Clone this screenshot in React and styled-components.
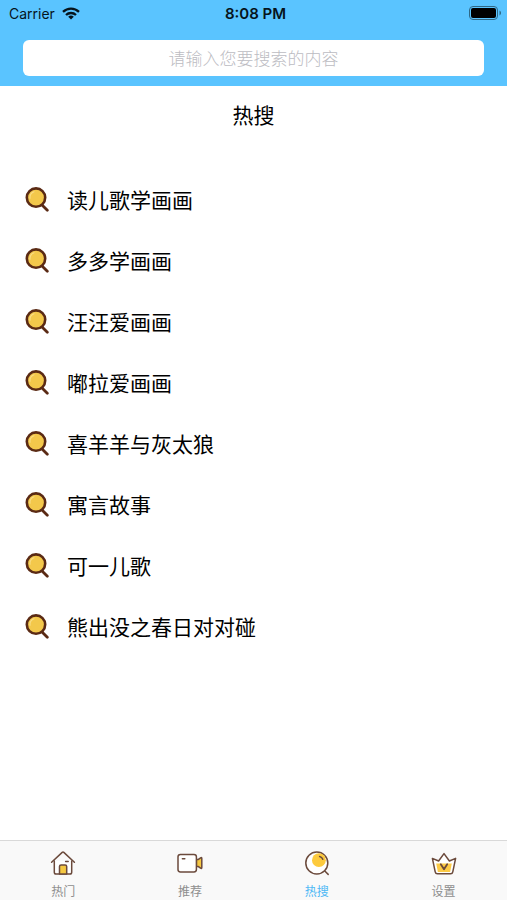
import React, { useState } from "react";
import styled, { createGlobalStyle } from "styled-components";

const COLORS = {
  sky: "#5ac4ff",
  skyText: "#4db8f5",
  outline: "#6b4a3c",
  brown: "#5a2a14",
  yellow: "#f5c842",
};

const HOT_SEARCHES = [
  "读儿歌学画画",
  "多多学画画",
  "汪汪爱画画",
  "嘟拉爱画画",
  "喜羊羊与灰太狼",
  "寓言故事",
  "可一儿歌",
  "熊出没之春日对对碰",
];

const WifiIcon = () => (
  <svg width="18" height="13" viewBox="0 0 18 13" aria-hidden="true">
    <g fill="none" stroke="#06141c" strokeWidth="2.3">
      <path d="M1 4.9a11.6 11.6 0 0 1 16 0" />
      <path d="M4 8a7.3 7.3 0 0 1 10 0" />
    </g>
    <path d="M9 12.6 6.2 9.8a4.1 4.1 0 0 1 5.6 0z" fill="#06141c" />
  </svg>
);

const BatteryIcon = () => (
  <svg width="33" height="14" viewBox="0 0 33 14" aria-hidden="true">
    <rect
      x="0.5"
      y="0.5"
      width="28"
      height="13"
      rx="3.5"
      fill="none"
      stroke="#2f6885"
    />
    <rect x="2" y="2" width="25" height="10" rx="2" fill="#000" />
    <path d="M30.5 4.6c2 .8 2 4 0 4.8z" fill="#2f6885" />
  </svg>
);

const MagnifierIcon = () => (
  <svg width="24" height="27" viewBox="0 -2 24 27" aria-hidden="true">
    <path
      d="m16.5 17.5 5.8 5.8"
      stroke={COLORS.brown}
      strokeWidth="2.8"
      strokeLinecap="round"
    />
    <circle
      cx="11"
      cy="10.6"
      r="9.2"
      fill="#f3c84b"
      stroke={COLORS.brown}
      strokeWidth="2.6"
    />
    <path
      d="M5 11.2a6.2 6.2 0 0 1 4-6.4"
      fill="none"
      stroke="#f9dd85"
      strokeWidth="1.2"
      strokeLinecap="round"
    />
  </svg>
);

const HomeIcon = () => (
  <svg width="26" height="26" viewBox="0 0 26 26" aria-hidden="true">
    <g
      fill="none"
      stroke={COLORS.outline}
      strokeWidth="1.5"
      strokeLinecap="round"
      strokeLinejoin="round"
    >
      <path d="M4.3 11v11.2q0 1.8 1.8 1.8h13.8q1.8 0 1.8-1.8V11" fill="#fff" />
      <path d="M1.6 12.2 12.2 2.4q.8-.7 1.6 0l10.6 9.8" />
      <path
        d="M9.5 24v-7.4q0-1.6 1.6-1.6h4q1.6 0 1.6 1.6V24z"
        fill={COLORS.yellow}
      />
      <path d="M15.6 11.4h2.6" />
    </g>
  </svg>
);

const VideoIcon = () => (
  <svg width="26" height="26" viewBox="0 0 26 26" aria-hidden="true">
    <g stroke={COLORS.outline} strokeWidth="1.5" strokeLinejoin="round">
      <path
        d="M19.4 9.4h2l2.2-1.6q1.2-.6 1.2.8v8.8q0 1.4-1.2.8l-2.2-1.6h-2z"
        fill={COLORS.yellow}
      />
      <rect x="1" y="4.4" width="18.4" height="17.6" rx="2.4" fill="#fff" />
      <path d="M5.4 8.8h2.4" strokeLinecap="round" />
    </g>
  </svg>
);

const SearchTabIcon = () => (
  <svg width="26" height="26" viewBox="0 0 26 26" aria-hidden="true">
    <circle
      cx="12.8"
      cy="13"
      r="11"
      fill="#fff"
      stroke={COLORS.outline}
      strokeWidth="1.5"
    />
    <circle cx="14.9" cy="10.2" r="6.9" fill="#fdca3d" />
    <g
      fill="none"
      stroke={COLORS.outline}
      strokeWidth="1.5"
      strokeLinecap="round"
    >
      <path d="M15.6 6.4q2.4.6 3.2 2.8" />
      <path d="m20.8 21 3.4 3.4" />
    </g>
  </svg>
);

const CrownIcon = () => (
  <svg width="26" height="26" viewBox="0 0 26 26" aria-hidden="true">
    <path
      d="M1.4 8.4 7.6 11 13 3.6l5.4 7.4 6.2-2.6-2.8 13.4q-.4 2-2.2 2H6.4q-1.8 0-2.2-2z"
      fill="#fff"
    />
    <path d="M5.2 13.4h15.6l-1.7 8.5H6.9z" fill="#fdcb45" />
    <g
      fill="none"
      stroke={COLORS.outline}
      strokeWidth="1.5"
      strokeLinecap="round"
      strokeLinejoin="round"
    >
      <path d="M1.4 8.4 7.6 11 13 3.6l5.4 7.4 6.2-2.6-2.8 13.4q-.4 2-2.2 2H6.4q-1.8 0-2.2-2z" />
      <path d="m9.8 14.2 3.2 5 3.2-5" strokeWidth="1.8" />
    </g>
  </svg>
);

const TABS = [
  { id: "home", label: "热门", Icon: HomeIcon },
  { id: "recommended", label: "推荐", Icon: VideoIcon },
  { id: "search", label: "热搜", Icon: SearchTabIcon },
  { id: "settings", label: "设置", Icon: CrownIcon },
];

const App = () => {
  const [query, setQuery] = useState("");
  const [activeTab, setActiveTab] = useState("search");

  return (
    <>
      <GlobalStyles />
      <Screen>
        <Header>
          <StatusBar>
            <Carrier>
              Carrier
              <WifiIcon />
            </Carrier>
            <Clock>8:08 PM</Clock>
            <Battery>
              <BatteryIcon />
            </Battery>
          </StatusBar>
          <SearchInput
            type="text"
            aria-label="搜索"
            placeholder="请输入您要搜索的内容"
            value={query}
            onChange={(event) => setQuery(event.target.value)}
          />
        </Header>
        <Main>
          <Title>热搜</Title>
          <List>
            {HOT_SEARCHES.map((term) => (
              <li key={term}>
                <TermButton type="button" onClick={() => setQuery(term)}>
                  <MagnifierIcon />
                  {term}
                </TermButton>
              </li>
            ))}
          </List>
        </Main>
        <TabBar>
          {TABS.map(({ id, label, Icon }) => (
            <Tab
              key={id}
              type="button"
              $active={id === activeTab}
              onClick={() => setActiveTab(id)}
            >
              <Icon />
              {label}
            </Tab>
          ))}
        </TabBar>
      </Screen>
    </>
  );
};

const GlobalStyles = createGlobalStyle`
  *, *::before, *::after {
    box-sizing: border-box;
  }

  body {
    margin: 0;
    background: #fff;
    color: #000;
    font-family: "Noto Sans CJK SC", sans-serif;
  }

  button, input {
    font: inherit;
    color: inherit;
  }
`;

const Screen = styled.div`
  display: flex;
  flex-direction: column;
  min-height: 100vh;
`;

const Header = styled.header`
  display: flex;
  flex-direction: column;
  gap: 14px;
  padding: 0 23px 10px;
  background: ${COLORS.sky};
`;

const StatusBar = styled.div`
  display: grid;
  grid-template-columns: 1fr auto 1fr;
  align-items: center;
  height: 26px;
  /* Reaches past the header's side padding */
  margin: 0 -18px 0 -14px;
  color: #06141c;
  font-family: Inter, sans-serif;
  font-size: 14px;
`;

const Carrier = styled.span`
  display: flex;
  align-items: center;
  gap: 7px;
`;

const Clock = styled.span`
  font-size: 15px;
  font-weight: 600;
`;

const Battery = styled.span`
  display: flex;
  justify-content: flex-end;
`;

const SearchInput = styled.input`
  width: 100%;
  height: 36px;
  padding: 0 12px 2px;
  border: none;
  border-radius: 6px;
  background: #fff;
  font-size: 17px;
  text-align: center;

  &::placeholder {
    color: #bcbcc2;
    font-weight: 300;
    opacity: 1;
  }
`;

const Main = styled.main`
  flex: 1;
`;

const Title = styled.h1`
  margin: 0;
  font-size: 21px;
  font-weight: 400;
  line-height: 56px;
  text-align: center;
`;

const List = styled.ul`
  list-style: none;
  margin: 0;
  padding: 27px 0;
`;

const TermButton = styled.button`
  display: flex;
  align-items: center;
  gap: 18px;
  width: 100%;
  height: 61px;
  padding: 0 25px 2px;
  border: none;
  background: none;
  font-size: 21px;
  line-height: 28px;
  text-align: left;
  cursor: pointer;
`;

const TabBar = styled.nav`
  position: sticky;
  bottom: 0;
  display: grid;
  grid-template-columns: repeat(4, 1fr);
  height: 60px;
  border-top: 1px solid #d9d9d9;
  background: #f9f9f9;
`;

const Tab = styled.button`
  display: flex;
  flex-direction: column;
  align-items: center;
  gap: 6px;
  padding: 9px 0 0;
  border: none;
  background: none;
  color: ${(props) => (props.$active ? COLORS.skyText : "#8e8e8e")};
  font-size: 12px;
  line-height: 18px;
  cursor: pointer;
`;

export default App;
